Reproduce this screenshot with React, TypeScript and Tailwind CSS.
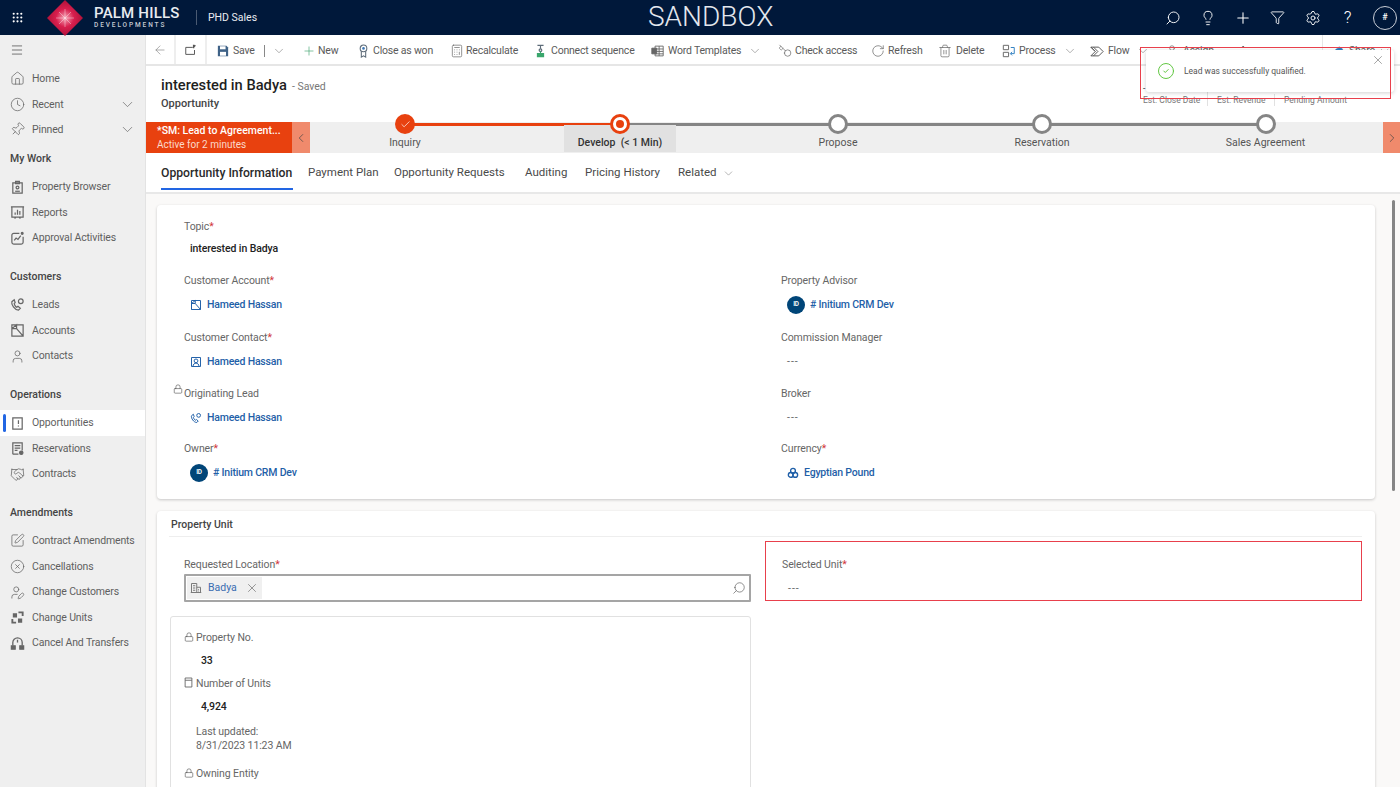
import React from "react";
import {
  ArrowLeft,
  Check,
  ChevronDown,
  ChevronLeft,
  ChevronRight,
  CircleCheck,
  CircleX,
  Clock,
  Filter,
  Handshake,
  Home,
  Key,
  Lightbulb,
  Lock,
  Menu,
  MoreVertical,
  Pin,
  Plus,
  RotateCw,
  Search,
  Settings,
  SquarePen,
  Trash2,
  User,
  UserPen,
  X,
  Calculator,
  Grip,
} from "lucide-react";

const font = "font-['Roboto','Open_Sans',sans-serif]";

// small drawn icons that the packages don't have
const LeadIcon = ({ className = "" }: { className?: string }) => (
  <svg viewBox="0 0 16 16" className={className} fill="none" stroke="currentColor" strokeWidth="1.3">
    <path d="M2 5c-1 3 3 9 7 9l2-2-2.500-2-1.500 1c-1-.5-2.500-3-2.500-4l1-1-1-3z" />
    <circle cx="11.500" cy="4.500" r="2.500" />
  </svg>
);

const AccountIcon = ({ className = "" }: { className?: string }) => (
  <svg viewBox="0 0 16 16" className={className} fill="none" stroke="currentColor" strokeWidth="1.3">
    <path d="M2 2h12v12H2zM2 14V6h5l7 8M2 6l5-4v4" />
  </svg>
);

const ContactCard = ({ className = "" }: { className?: string }) => (
  <svg viewBox="0 0 16 16" className={className} fill="none" stroke="currentColor" strokeWidth="1.3">
    <path d="M2 2h12v12H2z" />
    <circle cx="8" cy="6.500" r="2.500" />
    <path d="M4 14c0-3 2-4.500 4-4.500s4 1.500 4 4.500" />
  </svg>
);

const OppIcon = ({ className = "" }: { className?: string }) => (
  <svg viewBox="0 0 16 16" className={className} fill="none" stroke="currentColor" strokeWidth="1.3">
    <path d="M3 2h10v12H3z" />
    <path d="M9 4.500v4M9 10v1.200" />
  </svg>
);

const ClipIcon = ({ className = "" }: { className?: string }) => (
  <svg viewBox="0 0 16 16" className={className} fill="none" stroke="currentColor" strokeWidth="1.3">
    <path d="M3 3h10v11H3zM6 1.500h4V4H6z" />
    <circle cx="8" cy="8" r="1.500" />
    <path d="M5.500 12h5" />
  </svg>
);

const ReportIcon = ({ className = "" }: { className?: string }) => (
  <svg viewBox="0 0 16 16" className={className} fill="none" stroke="currentColor" strokeWidth="1.3">
    <path d="M2 2h12v11H2zM1 2h14M5 14.500l1-1.500M11 14.500l-1-1.500" />
    <path d="M5.500 10.500V8M8 10.500V5M10.500 10.500V6.500" />
  </svg>
);

const ApprovalIcon = ({ className = "" }: { className?: string }) => (
  <svg viewBox="0 0 16 16" className={className} fill="none" stroke="currentColor" strokeWidth="1.3">
    <path d="M10 2.500H4a2 2 0 0 0-2 2V12a2 2 0 0 0 2 2h8a2 2 0 0 0 2-2V6" />
    <path d="M4.500 10l2-2.500 2 1.500 3-4" />
    <circle cx="13" cy="2.500" r="1" fill="currentColor" />
  </svg>
);

const ReservationIcon = ({ className = "" }: { className?: string }) => (
  <svg viewBox="0 0 16 16" className={className} fill="none" stroke="currentColor" strokeWidth="1.3">
    <path d="M3 14V2h10v8M3 14h6" />
    <path d="M5 5h6M5 7.500h6M5 10h3" />
    <circle cx="12" cy="12.500" r="1.800" fill="currentColor" />
  </svg>
);

const UnitsIcon = ({ className = "" }: { className?: string }) => (
  <svg viewBox="0 0 16 16" className={className} fill="currentColor">
    <path d="M9 1.500h5.500v5h-2V3.500H9zM1.500 9.500h2v3h3v2h-5z" />
    <path d="M3 3.500h4.500V8H3zM8.500 9H13v4.500H8.500z" />
  </svg>
);

const TransferIcon = ({ className = "" }: { className?: string }) => (
  <svg viewBox="0 0 16 16" className={className} fill="none" stroke="currentColor" strokeWidth="1.4">
    <path d="M3 10V7a5 5 0 0 1 10 0v3" />
    <path d="M1.500 10.500h4v3.500h-4zM10.500 10.500h4v3.500h-4z" fill="currentColor" />
    <path d="M8 4v3" />
  </svg>
);

const BuildingIcon = ({ className = "" }: { className?: string }) => (
  <svg viewBox="0 0 16 16" className={className} fill="none" stroke="currentColor" strokeWidth="1.3">
    <path d="M2 14V2h7v12M9 7h5v7M1 14h14" />
    <path d="M4 5h3M4 8h3M4 11h3M11 10h1M11 12h1" />
  </svg>
);

const CurrencyIcon = ({ className = "" }: { className?: string }) => (
  <svg viewBox="0 0 16 16" className={className} fill="none" stroke="currentColor" strokeWidth="1.8">
    <circle cx="8" cy="5" r="3.200" />
    <circle cx="5" cy="10.500" r="3.200" />
    <circle cx="11" cy="10.500" r="3.200" />
  </svg>
);

const CalcField = ({ className = "" }: { className?: string }) => (
  <svg viewBox="0 0 12 14" className={className} fill="none" stroke="currentColor" strokeWidth="1.200">
    <path d="M1.500 1h9v12h-9zM1.500 4h9" />
  </svg>
);

const SaveIcon = () => (
  <svg viewBox="0 0 14 14" className="w-[12px] h-[12px]">
    <path d="M1 1h10l2 2v10H1z" fill="#3f6287" />
    <path d="M3.500 1.500h6.500v3.500H3.500z" fill="#ffffff" />
    <path d="M3.500 8h7v4.500h-7z" fill="#ffffff" />
  </svg>
);

const PopOutIcon = () => (
  <svg viewBox="0 0 16 16" className="w-[14px] h-[14px] text-[#555555]" fill="none" stroke="currentColor" strokeWidth="1.1">
    <path d="M10 5H2v8h10V8" />
    <path d="M11 2v4M13 2.500l-2 2" strokeWidth="1.600" />
  </svg>
);

const WonIcon = () => (
  <svg viewBox="0 0 12 16" className="w-[11px] h-[14px]" fill="none" strokeWidth="1.2">
    <circle cx="6" cy="5" r="3.800" stroke="#5d6b78" />
    <circle cx="6" cy="5" r="1.500" fill="#3f78b5" />
    <path d="M3.500 8.500V15L6 13.500 8.500 15V8.500" stroke="#5d6b78" />
  </svg>
);

const SequenceIcon = () => (
  <svg viewBox="0 0 12 16" className="w-[11px] h-[14px]" fill="none" strokeWidth="1.3">
    <path d="M2.500 1.500h7M6 1.500v4" stroke="#5d6b78" />
    <circle cx="6" cy="7" r="1.500" stroke="#5d6b78" />
    <path d="M6 8.500v2" stroke="#3aa76d" />
    <path d="M2.500 11h7v3.500h-7z" fill="#3aa76d" stroke="#3aa76d" />
  </svg>
);

const WordIcon = () => (
  <svg viewBox="0 0 16 14" className="w-[13px] h-[12px] text-[#666666]" fill="none" stroke="currentColor" strokeWidth="1.1">
    <path d="M5 1h10v12H5zM5 4.500h10M5 7.500h10M5 10.500h10M10 1v12" />
    <path d="M1 3.500h6v7H1z" fill="#666666" />
  </svg>
);

const ProcessIcon = () => (
  <svg viewBox="0 0 16 16" className="w-[14px] h-[14px] text-[#666666]" fill="none" stroke="currentColor" strokeWidth="1.1">
    <path d="M1.500 1.500h6v5h-6zM1.500 9.500h6v5h-6z" />
    <path d="M10 4h4v7h-4" stroke="#2f7fc1" />
    <path d="M11.500 9l-2 2 2 2" stroke="#2f7fc1" />
  </svg>
);

const FlowIcon = () => (
  <svg viewBox="0 0 16 14" className="w-[14px] h-[13px] text-[#555555]" fill="none" stroke="currentColor" strokeWidth="1.1">
    <path d="M1 2h9l5 5-5 5H1l5-5z" />
    <path d="M4 2l5 5-5 5M1 2l5 5" />
  </svg>
);

const ShareIcon = () => (
  <svg viewBox="0 0 16 14" className="w-[14px] h-[13px] text-[#2f7fc1]" fill="currentColor">
    <path d="M2 6h8v7H2z" />
    <path d="M9 1l5 3.500L9 8V6C6 6 4.500 7 3.500 9 4 5 6 3 9 3z" />
  </svg>
);

const FieldLock = () => <Lock className="w-[10px] h-[12px] text-[#555555]" strokeWidth={1.500} />;

const Logo = () => (
  <svg viewBox="0 0 36 36" className="w-[36px] h-[36px]">
    <defs>
      <radialGradient id="phd" cx="50%" cy="50%" r="55%">
        <stop offset="0%" stopColor="#f5a3b5" />
        <stop offset="45%" stopColor="#d81f4e" />
        <stop offset="100%" stopColor="#a80f35" />
      </radialGradient>
    </defs>
    <path d="M18 0l18 18-18 18L0 18z" fill="url(#phd)" />
    <path d="M18 9v18M9 18h18M12 12l12 12M24 12L12 24" stroke="#ffffff" strokeOpacity=".55" strokeWidth=".7" />
  </svg>
);

const navIcon = "w-[15px] h-[15px]";

const Row = ({ icon, label, active, chevron }: { icon: React.ReactNode; label: string; active?: boolean; chevron?: boolean }) => (
  <div className={`relative flex items-center h-[25.6px] pl-[10px] pr-[9px] text-[10.500px] tracking-[-0.15px] text-[#5f5f5f] ${active ? "bg-white" : ""}`}>
    {active && <span className="absolute left-[3px] top-[4px] h-[18px] w-[3px] bg-[#2266e3] rounded-sm" />}
    <span className="w-[22px] shrink-0 text-[#666666] flex">{icon}</span>
    <span className="whitespace-nowrap">{label}</span>
    {chevron && <ChevronDown className="ml-auto w-[17px] h-[17px] text-[#666666]" strokeWidth={1} />}
  </div>
);

const GroupTitle = ({ label, className }: { label: string; className: string }) => (
  <div className={`pl-[10px] flex items-center h-[20px] text-[10.500px] font-medium text-[#444444] ${className}`}>{label}</div>
);

const Sidebar = () => (
  <aside className="w-[146px] shrink-0 bg-[#efefef] border-r border-[#e3e3e3] flex flex-col">
    <div className="h-[30px] pl-[10px] flex items-center">
      <Menu className="w-[14px] h-[14px] text-[#444444]" strokeWidth={1.200} />
    </div>
    <div className="mt-[1px]">
      <Row icon={<Home className={navIcon} strokeWidth={1.200} />} label="Home" />
      <Row icon={<Clock className={navIcon} strokeWidth={1.200} />} label="Recent" chevron />
      <Row icon={<Pin className={`${navIcon} rotate-45`} strokeWidth={1.200} />} label="Pinned" chevron />
    </div>
    <GroupTitle label="My Work" className="mt-[6px] mb-[5.500px]" />
    <Row icon={<ClipIcon className={navIcon} />} label="Property Browser" />
    <Row icon={<ReportIcon className={navIcon} />} label="Reports" />
    <Row icon={<ApprovalIcon className={navIcon} />} label="Approval Activities" />
    <GroupTitle label="Customers" className="mt-[15.500px] mb-[5.500px]" />
    <Row icon={<LeadIcon className={navIcon} />} label="Leads" />
    <Row icon={<AccountIcon className={navIcon} />} label="Accounts" />
    <Row icon={<User className={navIcon} strokeWidth={1.200} />} label="Contacts" />
    <GroupTitle label="Operations" className="mt-[16px] mb-[5.500px]" />
    <Row icon={<OppIcon className={navIcon} />} label="Opportunities" active />
    <Row icon={<ReservationIcon className={navIcon} />} label="Reservations" />
    <Row icon={<Handshake className={navIcon} strokeWidth={1.200} />} label="Contracts" />
    <GroupTitle label="Amendments" className="mt-[16px] mb-[5px]" />
    <Row icon={<SquarePen className={navIcon} strokeWidth={1.200} />} label="Contract Amendments" />
    <Row icon={<CircleX className={navIcon} strokeWidth={1.200} />} label="Cancellations" />
    <Row icon={<UserPen className={navIcon} strokeWidth={1.200} />} label="Change Customers" />
    <Row icon={<UnitsIcon className={navIcon} />} label="Change Units" />
    <Row icon={<TransferIcon className={navIcon} />} label="Cancel And Transfers" />
  </aside>
);

const TopBar = () => (
  <header className="relative h-[35px] bg-[#00183a] flex items-center text-white shrink-0">
    <div className="w-[47px] pl-[11px]">
      <Grip className="w-[13px] h-[13px]" strokeWidth={2} />
    </div>
    <Logo />
    <div className="ml-[11px] w-[102px] flex flex-col leading-none">
      <span className="text-[15px] font-medium tracking-[0.2px] text-[#e8ebf0] whitespace-nowrap">PALM HILLS</span>
      <span className="text-[6.500px] font-medium tracking-[1.900px] mt-[1px] text-[#c5cbd4] whitespace-nowrap">DEVELOPMENTS</span>
    </div>
    <div className="w-px h-[15px] bg-[#4a5a72]" />
    <span className="ml-[11px] text-[10.500px] text-[#e8ebf0]">PHD Sales</span>
    <span className="absolute left-[648px] top-[0px] text-[28px] leading-[34px] font-light text-[#e3e7ee]">SANDBOX</span>
    <div className="ml-auto flex items-center pr-[3px]">
      <div className="w-[35px] flex justify-center"><Search className="w-[16px] h-[16px] -scale-x-100" strokeWidth={1.400} /></div>
      <div className="w-[35px] flex justify-center"><Lightbulb className="w-[16px] h-[16px]" strokeWidth={1.400} /></div>
      <div className="w-[35px] flex justify-center"><Plus className="w-[18px] h-[18px]" strokeWidth={1.400} /></div>
      <div className="w-[35px] flex justify-center"><Filter className="w-[15px] h-[15px]" strokeWidth={1.400} /></div>
      <div className="w-[35px] flex justify-center"><Settings className="w-[16px] h-[16px]" strokeWidth={1.400} /></div>
      <div className="w-[35px] flex justify-center text-[17px] font-light leading-none">?</div>
      <div className="ml-[8px] w-[24px] h-[24px] rounded-full border border-[#c8cdd6] flex items-center justify-center text-[9px] font-semibold">#</div>
    </div>
  </header>
);

const barIcon = "w-[14px] h-[14px] text-[#666666]";

const ToolItem = ({ icon, label, width, chevron, iconWidth }: { icon: React.ReactNode; label: string; width: string; chevron?: string; iconWidth: string }) => (
  <div className={`flex items-center shrink-0 ${width}`}>
    <span className={`flex shrink-0 ${iconWidth}`}>{icon}</span>
    <span className="whitespace-nowrap">{label}</span>
    {chevron && <ChevronDown className={`w-[14px] h-[14px] text-[#777777] ${chevron}`} strokeWidth={1} />}
  </div>
);

const Toolbar = () => (
  <div className="h-[31px] shrink-0 bg-white border-b-2 border-[#e6e6e6] flex items-center text-[10.500px] tracking-[-0.2px] text-[#5a5a5a]">
    <div className="w-[30px] h-full border-r-2 border-[#eeeeee] flex items-center justify-center">
      <ArrowLeft className="w-[14px] h-[14px] text-[#777777]" strokeWidth={1} />
    </div>
    <div className="w-[31px] h-full border-r-2 border-[#eeeeee] flex items-center justify-center">
      <PopOutIcon />
    </div>
    <div className="pl-[10px] pt-[3px] flex items-center">
      <div className="flex items-center shrink-0 w-[85px]">
        <span className="w-[16px] flex"><SaveIcon /></span>
        <span>Save</span>
        <span className="ml-[9px] w-px h-[12px] bg-[#888888]" />
        <ChevronDown className="ml-[7px] w-[14px] h-[14px] text-[#777777]" strokeWidth={1} />
      </div>
      <ToolItem icon={<Plus className="w-[14px] h-[14px] text-[#3fa56f]" strokeWidth={1.100} />} label="New" width="w-[56px]" iconWidth="w-[16px]" />
      <ToolItem icon={<WonIcon />} label="Close as won" width="w-[92px]" iconWidth="w-[15px]" />
      <ToolItem icon={<Calculator className={barIcon} strokeWidth={1.200} />} label="Recalculate" width="w-[85px]" iconWidth="w-[16px]" />
      <ToolItem icon={<SequenceIcon />} label="Connect sequence" width="w-[116px]" iconWidth="w-[16px]" />
      <ToolItem icon={<WordIcon />} label="Word Templates" width="w-[127px]" chevron="ml-[7px]" iconWidth="w-[17px]" />
      <ToolItem icon={<Key className={`${barIcon} -scale-x-100`} strokeWidth={1.200} />} label="Check access" width="w-[93px]" iconWidth="w-[17px]" />
      <ToolItem icon={<RotateCw className={barIcon} strokeWidth={1.200} />} label="Refresh" width="w-[67px]" iconWidth="w-[17px]" />
      <ToolItem icon={<Trash2 className={barIcon} strokeWidth={1.200} />} label="Delete" width="w-[64px]" iconWidth="w-[18px]" />
      <ToolItem icon={<ProcessIcon />} label="Process" width="w-[88px]" chevron="ml-[7px]" iconWidth="w-[17px]" />
      <ToolItem icon={<FlowIcon />} label="Flow" width="w-[75px]" chevron="ml-[7px]" iconWidth="w-[18px]" />
      <ToolItem icon={<User className={barIcon} strokeWidth={1.200} />} label="Assign" width="w-[71px]" iconWidth="w-[18px]" />
      <div className="w-[86px] flex"><MoreVertical className="w-[14px] h-[14px] text-[#555555]" strokeWidth={1.500} /></div>
      <div className="w-px h-[29px] -mt-[3px] bg-[#e6e6e6]" />
      <ToolItem icon={<ShareIcon />} label="Share" width="w-[68px] pl-[8px]" chevron="ml-[3px]" iconWidth="w-[18px]" />
    </div>
  </div>
);

const TitleBar = () => (
  <div className="h-[56px] shrink-0 bg-white flex pl-[15px]">
    <div className="pt-[9px]">
      <div className="flex items-baseline leading-[20px]">
        <span className="text-[14.700px] font-medium text-[#1f1f1f]">interested in Badya</span>
        <span className="ml-[5px] text-[10.500px] text-[#777777]">- Saved</span>
      </div>
      <div className="text-[11px] font-medium text-[#444444] leading-[13px]">Opportunity</div>
    </div>
    <div className="ml-auto mt-[16px] w-[257px] flex items-end text-[8.500px] text-[#777777] h-[24px]">
      <div className="w-[65px] border-r border-[#e1e1e1] leading-[12px]">
        <div className="text-[#333333]">-</div>
        <div className="whitespace-nowrap">Est. Close Date</div>
      </div>
      <div className="w-[67px] pl-[9px] border-r border-[#e1e1e1] whitespace-nowrap leading-[12px]">Est. Revenue</div>
      <div className="pl-[9px] whitespace-nowrap leading-[12px]">Pending Amount</div>
    </div>
  </div>
);

const Stage = ({ width, label, state }: { width: string; label: string; state: "done" | "active" | "todo" }) => (
  <div className={`relative flex flex-col items-center ${width}`}>
    {state === "active" && <div className="absolute top-[3px] bottom-[1px] w-[112px] bg-[#e1e1e1]" />}
    <div className="relative -mt-[8px] h-[20px] flex items-center justify-center">
      {state === "done" && (
        <span className="w-[20px] h-[20px] rounded-full bg-[#e8410f] flex items-center justify-center">
          <Check className="w-[11px] h-[11px] text-white" strokeWidth={1.500} />
        </span>
      )}
      {state === "active" && (
        <span className="w-[20px] h-[20px] rounded-full bg-white border-[3px] border-[#e8410f] flex items-center justify-center">
          <span className="w-[8px] h-[8px] rounded-full bg-[#e8410f]" />
        </span>
      )}
      {state === "todo" && <span className="w-[20px] h-[20px] rounded-full bg-white border-[3px] border-[#858585]" />}
    </div>
    <div className={`relative mt-[2px] text-[10.500px] leading-[14px] whitespace-pre ${state === "active" ? "font-medium text-[#333333]" : "text-[#555555]"}`}>{label}</div>
  </div>
);

const ProcessBar = () => (
  <div className="h-[31px] shrink-0 flex bg-[#efefef]">
    <div className="w-[146px] bg-[#e8410f] pl-[11px] pt-[2px] text-white">
      <div className="text-[10.500px] font-medium leading-[14px] whitespace-nowrap">*SM: Lead to Agreement...</div>
      <div className="text-[10px] leading-[13px] text-[#fbd9cb]">Active for 2 minutes</div>
    </div>
    <div className="w-[18px] bg-[#f08a6c] flex items-center justify-center">
      <ChevronLeft className="w-[14px] h-[14px] text-[#444444]" strokeWidth={1.200} />
    </div>
    <div className="relative flex w-[1073px]">
      <div className="absolute left-[95px] top-[0.500px] w-[215px] h-[3px] bg-[#e8410f]" />
      <div className="absolute left-[310px] top-[0.500px] w-[645px] h-[3px] bg-[#858585]" />
      <Stage width="w-[190px]" label="Inquiry" state="done" />
      <Stage width="w-[240px]" label="Develop  (< 1 Min)" state="active" />
      <Stage width="w-[196px]" label="Propose" state="todo" />
      <Stage width="w-[212px]" label="Reservation" state="todo" />
      <Stage width="w-[235px]" label="Sales Agreement" state="todo" />
    </div>
    <div className="w-[17px] bg-[#f08a6c] flex items-center justify-center">
      <ChevronRight className="w-[14px] h-[14px] text-[#444444]" strokeWidth={1.200} />
    </div>
  </div>
);

const tabClass = "h-[37px] pt-[5px] border-b-2 flex items-center whitespace-nowrap";

const Tabs = () => (
  <div className="h-[41px] shrink-0 bg-white border-b-2 border-[#e8e8e8] flex pl-[15px] text-[11.500px] text-[#4a4a4a]">
    <div className="w-[147px]">
      <div className={`${tabClass} w-[132px] border-[#2266e3] text-[12.200px] font-medium text-[#2a2a2a]`}>Opportunity Information</div>
    </div>
    <div className={`${tabClass} border-transparent w-[86px]`}>Payment Plan</div>
    <div className={`${tabClass} border-transparent w-[131px]`}>Opportunity Requests</div>
    <div className={`${tabClass} border-transparent w-[60px]`}>Auditing</div>
    <div className={`${tabClass} border-transparent w-[93px]`}>Pricing History</div>
    <div className={`${tabClass} border-transparent`}>Related<ChevronDown className="ml-[5px] w-[13px] h-[13px] text-[#777777]" strokeWidth={1} /></div>
  </div>
);

const Field = ({ label, required, height, lock, valueGap = "mt-[6px]", children }: { label: string; required?: boolean; height: string; lock?: boolean; valueGap?: string; children: React.ReactNode }) => (
  <div className={`${height} relative pl-[14px]`}>
    <div className="flex items-center h-[18px] text-[10.500px] tracking-[-0.1px] text-[#666666]">
      {lock && <span className="absolute left-[3px] -top-[2px]"><FieldLock /></span>}
      {label}
      {required && <span className="text-[#d13438]">*</span>}
    </div>
    <div className={`${valueGap} pl-[6px] h-[18px] flex items-center text-[10.500px]`}>{children}</div>
  </div>
);

const LinkValue = ({ icon, label }: { icon: React.ReactNode; label: string }) => (
  <div className="flex items-center text-[#1f5fa8] font-medium tracking-[-0.2px]">
    <span className="w-[17px] flex">{icon}</span>
    <span className="whitespace-nowrap">{label}</span>
  </div>
);

const OwnerValue = () => (
  <div className="flex items-center text-[#1f5fa8] font-medium tracking-[-0.2px]">
    <span className="w-[18px] h-[18px] rounded-full bg-[#004578] text-white text-[6.500px] font-semibold flex items-center justify-center mr-[5px]">ID</span>
    <span className="whitespace-nowrap"># Initium CRM Dev</span>
  </div>
);

const Dash = () => <span className="text-[#666666] tracking-[1px]">---</span>;

const linkIcon = "w-[12px] h-[12px]";

const Content = () => (
  <div className="relative flex-1 min-h-0 overflow-hidden bg-[#faf9f8] pl-[11px] pr-[25px] pt-[11px]">
    <section className="bg-white rounded shadow-[0_1px_3px_rgba(0,0,0,0.2)] h-[294px] pt-[13px] pl-[13px] grid grid-cols-[595px_1fr]">
      <div>
        <Field label="Topic" required height="h-[54px]" valueGap="mt-[4px]">
          <span className="font-medium tracking-[-0.1px] text-[#222222]">interested in Badya</span>
        </Field>
        <Field label="Customer Account" required height="h-[57px]">
          <LinkValue icon={<AccountIcon className={linkIcon} />} label="Hameed Hassan" />
        </Field>
        <Field label="Customer Contact" required height="h-[56px]">
          <LinkValue icon={<ContactCard className={linkIcon} />} label="Hameed Hassan" />
        </Field>
        <Field label="Originating Lead" lock height="h-[55px]">
          <LinkValue icon={<LeadIcon className={linkIcon} />} label="Hameed Hassan" />
        </Field>
        <Field label="Owner" required height="h-[40px]">
          <OwnerValue />
        </Field>
      </div>
      <div className="pl-[2px] pt-[54px]">
        <Field label="Property Advisor" height="h-[57px]">
          <OwnerValue />
        </Field>
        <Field label="Commission Manager" height="h-[56px]">
          <Dash />
        </Field>
        <Field label="Broker" height="h-[55px]">
          <Dash />
        </Field>
        <Field label="Currency" required height="h-[40px]">
          <LinkValue icon={<CurrencyIcon className={linkIcon} />} label="Egyptian Pound" />
        </Field>
      </div>
    </section>

    <section className="mt-[12px] bg-white rounded-t shadow-[0_1px_3px_rgba(0,0,0,0.2)] h-[400px] px-[12px]">
      <div className="h-[26px] pt-[2px] pl-[2px] flex items-center border-b border-[#eeeeee] text-[10.500px] font-medium text-[#444444] mr-[1px]">Property Unit</div>
      <div className="grid grid-cols-[596px_597px]">
        <div className="pl-[1px] pt-[4px]">
          <div className="pt-[15px] pl-[14px] h-[60px]">
            <div className="flex items-center h-[18px] text-[10.500px] tracking-[-0.1px] text-[#666666]">
              Requested Location<span className="text-[#d13438]">*</span>
            </div>
            <div className="w-[567px] h-[28px] border-2 border-[#a5a5a5] rounded-[1px] flex items-center pl-[1px] pr-[3px]">
              <div className="h-[22px] w-[75px] bg-[#f0f0f0] flex items-center text-[10.500px] text-[#3a6cb0]">
                <BuildingIcon className="ml-[3px] w-[12px] h-[12px] text-[#777777]" />
                <span className="ml-[6px]">Badya</span>
                <X className="ml-[8px] w-[14px] h-[14px] text-[#555555]" strokeWidth={1} />
              </div>
              <Search className="ml-auto w-[14px] h-[14px] text-[#555555] -scale-x-100" strokeWidth={1.100} />
            </div>
          </div>
        </div>
        <div className="mt-[4px] h-[60px] border border-[#e8404c] pl-[16px] pt-[14px] text-[10.500px]">
          <div className="flex items-center h-[18px] tracking-[-0.1px] text-[#666666]">
            Selected Unit<span className="text-[#d13438]">*</span>
          </div>
          <div className="mt-[6px] pl-[6px] h-[18px] flex items-center"><Dash /></div>
        </div>
      </div>
      <div className="mt-[15px] ml-[1px] w-[581px] h-[300px] border border-[#e1e1e1] rounded-t-[3px] pl-[13px] pt-[12px] text-[10.500px] tracking-[-0.1px] text-[#666666]">
        <div className="flex items-center h-[18px]"><span className="w-[12px] -mt-[3px] flex"><FieldLock /></span>Property No.</div>
        <div className="mt-[5px] pl-[17px] h-[18px] flex items-center font-medium text-[#222222]">33</div>
        <div className="mt-[5px] flex items-center h-[18px]"><span className="w-[12px] -mt-[3px] flex"><CalcField className="w-[9px] h-[11px] text-[#666666]" /></span>Number of Units</div>
        <div className="mt-[5px] pl-[17px] h-[18px] flex items-center font-medium text-[#222222]">4,924</div>
        <div className="mt-[9px] pl-[12px] leading-[14px]">
          <div>Last updated:</div>
          <div>8/31/2023 11:23 AM</div>
        </div>
        <div className="mt-[12px] flex items-center h-[18px]"><span className="w-[12px] -mt-[3px] flex"><FieldLock /></span>Owning Entity</div>
      </div>
    </section>

    <div className="absolute right-[5px] top-[6px] w-[3px] h-[291px] rounded-full bg-[#858585]" />
  </div>
);

const App = () => (
  <div className={`relative w-[1400px] h-[787px] overflow-hidden flex flex-col bg-white ${font}`}>
    <TopBar />
    <div className="flex flex-1 min-h-0">
      <Sidebar />
      <main className="flex-1 min-w-0 flex flex-col">
        <Toolbar />
        <TitleBar />
        <ProcessBar />
        <Tabs />
        <Content />
      </main>
    </div>

    {/* toast and the red annotation frame sit over the command bar */}
    <div className="absolute left-[1146px] top-[50px] w-[248px] h-[42px] bg-white rounded-[3px] shadow-[0_1px_4px_rgba(0,0,0,0.18)] flex items-center pl-[11px] text-[8.500px] text-[#555555]">
      <CircleCheck className="w-[18px] h-[18px] text-[#5fc53f]" strokeWidth={1.300} />
      <span className="ml-[9px] whitespace-nowrap">Lead was successfully qualified.</span>
      <X className="absolute right-[9px] top-[3px] w-[14px] h-[14px] text-[#666666]" strokeWidth={1} />
    </div>
    <div className="absolute left-[1140px] top-[47px] w-[251px] h-[52px] border border-[#e8404c]" />
  </div>
);

export default App;
